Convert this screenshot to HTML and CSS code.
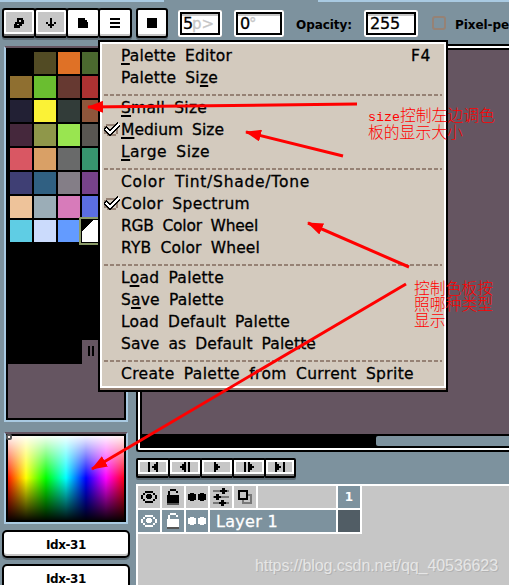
FILE: index.html
```
<!DOCTYPE html>
<html lang="en">
<head>
  <meta charset="UTF-8" />
  <meta name="viewport" content="width=device-width, initial-scale=1.0"/>
  <title>Sprite Editor - Palette Options</title>
  <link rel="stylesheet" href="styles.css">
</head>
<body>

  <div class="tabs"><span class="tab-line left"></span><span class="tab-line right"></span></div>

  <!-- Toolbar -->
  <div class="toolbar">
    <div class="button-group">
      <button class="tool gray"><svg width="12" height="12" viewBox="0 0 12 12"><path d="M4 1h6v2h1v4H9v2H7v2H1V7h1V5h2z"/><path fill="#c6c6c6" d="M6 3h2v2H6zM4 7h2v1H4z"/></svg></button>
      <button class="tool gray"><svg width="12" height="12" viewBox="0 0 12 12"><path d="M5 1h2v6h2V5h2v2H9v2H7v2H5V9H3V7H1V5h2v2h2z"/></svg></button>
      <button class="tool"><svg width="12" height="12" viewBox="0 0 12 12"><path d="M1 1h7v2h2v2h1v6H1z"/></svg></button>
      <button class="tool"><svg width="12" height="12" viewBox="0 0 12 12"><path d="M1 1h10v2H1zM1 5h10v2H1zM1 9h10v2H1z"/></svg></button>
    </div>
    <button class="tool brush"><svg width="10" height="10"><path d="M0 0h10v10H0z"/></svg></button>
    <div class="field size"><span class="fit" data-width="9">5</span><i>p&gt;</i></div>
    <div class="field angle"><span class="fit" data-width="9">0</span><i>°</i></div>
    <span class="caption fit" data-width="56">Opacity:</span>
    <div class="field opacity"><span class="fit" data-width="30">255</span></div>
    <span class="checkbox"></span>
    <span class="caption fit pixel" data-width="54">Pixel-pe</span>
  </div>

  <div class="workspace">
    <!-- Left side: palette and color selector -->
    <div class="sidebar">
      <div class="palette">
        <div class="swatches" id="swatches"></div>
        <div class="palette-end"><span class="grip"></span></div>
      </div>
      <div class="spectrum"><span class="spectrum-mark"></span></div>
      <button class="index"><span class="fit" data-width="40">Idx-31</span></button>
      <button class="index"><span class="fit" data-width="40">Idx-31</span></button>
    </div>

    <!-- Right side: canvas and timeline -->
    <div class="content">
      <div class="editor">
        <div class="canvas"></div>
        <div class="scrollbar"><span class="thumb"></span></div>
      </div>

      <div class="playback">
        <button><svg width="12" height="10"><path d="M1 0h2v10H1zM9 0h2v10H9V8H7V6H5V4h2V2h2z"/></svg></button>
        <button><svg width="12" height="10"><path d="M7 0v10H5V8H3V6H1V4h2V2h2V0zM9 0h2v10H9z"/></svg></button>
        <button><svg width="12" height="10"><path d="M3 0h2v2h2v2h2v2H7v2H5v2H3z"/></svg></button>
        <button><svg width="12" height="10"><path d="M1 0h2v10H1zM5 0h2v2h2v2h2v2H9v2H7v2H5z"/></svg></button>
        <button><svg width="12" height="10"><path d="M1 0h2v2h2v2h2v2H5v2H3v2H1zM9 0h2v10H9z"/></svg></button>
      </div>

      <div class="timeline">
        <div class="row head">
          <span class="cell"><svg width="18" height="16"><use href="#eye"/></svg></span>
          <span class="cell"><svg width="14" height="16"><use href="#lock"/></svg></span>
          <span class="cell"><svg width="20" height="16"><use href="#dots"/></svg></span>
          <span class="cell"><svg width="16" height="18"><path fill="#777" d="M0 2h16v2H0zM0 8h16v2H0zM0 14h16v2H0z"/><path d="M9 0h3v2h2v2h-2v2H9V4H7V2h2zM3 6h3v2h2v2H6v2H3v-2H1V8h2zM8 12h3v2h2v2h-2v2H8v-2H6v-2h2z"/></svg></span>
          <span class="cell"><svg width="14" height="14"><path fill="#777" d="M4 4h10v10H4zM6 6v6h6V6z" fill-rule="evenodd"/><path fill="#c6c6c6" d="M2 2h6v6H2z"/><path d="M0 0h10v10H0zM2 2v6h6V2z" fill-rule="evenodd"/></svg></span>
          <span class="cell wide"></span>
          <span class="cell frame">1</span>
        </div>
        <div class="row layer">
          <span class="cell"><svg width="18" height="16"><use href="#eye"/></svg></span>
          <span class="cell"><svg width="14" height="16"><use href="#lock"/></svg></span>
          <span class="cell"><svg width="20" height="16"><use href="#dots"/></svg></span>
          <span class="cell name"><span class="fit" data-width="62">Layer 1</span></span>
          <span class="cell cel"></span>
        </div>
      </div>
    </div>
  </div>

  <!-- Palette options menu -->
  <div class="menu">
    <div class="item"><span class="fit" data-width="111"><u>P</u>alette Editor</span><span class="shortcut fit" data-width="20">F4</span></div>
    <div class="item"><span class="fit" data-width="97">Palette Si<u>z</u>e</span></div>
    <hr>
    <div class="item"><span class="fit" data-width="86"><u>S</u>mall Size</span></div>
    <div class="item checked"><svg class="check" width="16" height="16"><use href="#check"/></svg><span class="fit" data-width="103"><u>M</u>edium Size</span></div>
    <div class="item"><span class="fit" data-width="89"><u>L</u>arge Size</span></div>
    <hr>
    <div class="item"><span class="fit" data-width="189">Color Tint/Shade/Tone</span></div>
    <div class="item checked"><svg class="check" width="16" height="16"><use href="#check"/></svg><span class="fit" data-width="129">Color Spectrum</span></div>
    <div class="item"><span class="fit" data-width="137">RGB Color Wheel</span></div>
    <div class="item"><span class="fit" data-width="139">RYB Color Wheel</span></div>
    <hr>
    <div class="item"><span class="fit" data-width="103">L<u>o</u>ad Palette</span></div>
    <div class="item"><span class="fit" data-width="103">S<u>a</u>ve Palette</span></div>
    <div class="item"><span class="fit" data-width="169">Load Default Palette</span></div>
    <div class="item"><span class="fit" data-width="195">Save as Default Palette</span></div>
    <hr>
    <div class="item"><span class="fit" data-width="293">Create Palette from Current Sprite</span></div>
  </div>

  <!-- Notes and arrows -->
  <svg class="arrows" width="509" height="585">
    <defs>
      <marker id="head" markerUnits="userSpaceOnUse" markerWidth="16" markerHeight="12" refX="15" refY="6" orient="auto">
        <path d="M0 0L16 6L0 12z" fill="#f00"/>
      </marker>
    </defs>
    <path d="M357 104L88 107"/>
    <path d="M343 156L246 132"/>
    <path d="M409 267L308 223"/>
    <path d="M406 284L92 469"/>
  </svg>
  <div class="note first"><span>size</span>控制左边调色<br>板的显示大小</div>
  <div class="note second">控制色板按<br>照哪种类型<br>显示</div>
  <div class="watermark"><span class="fit" data-width="243">https://blog.csdn.net/qq_40536623</span></div>

  <!-- Shared icons -->
  <svg class="icons">
    <symbol id="eye" viewBox="0 0 18 16">
      <path d="M5 2h8v2H5zM3 4h2v2H3zM13 4h2v2h-2zM1 6h2v4H1zM15 6h2v4h-2zM3 10h2v2H3zM13 10h2v2h-2zM5 12h8v2H5zM7 5h4v1h1v3h-1v1H7V9H6V6h1z"/>
      <path class="hole" d="M7 6h2v1H7z"/>
    </symbol>
    <symbol id="lock" viewBox="0 0 14 16">
      <path d="M4 0h6v2h2v2h-2V2H4v4h9v8H1V6h1V2h2z"/>
      <path class="hole" d="M7 8h2v4H7z"/>
      <path fill="#555" d="M1 14h12v2H1z"/>
    </symbol>
    <symbol id="dots" viewBox="0 0 20 16">
      <path d="M3 4h4v1h2v6H7v1H3v-1H1V5h2zM13 4h4v1h2v6h-2v1h-4v-1h-2V5h2z"/>
    </symbol>
    <symbol id="check" viewBox="0 0 16 16">
      <path fill="#968275" d="M2 2h11v2h1v8h-2v2H3v-2H0V4h2z"/>
      <path fill="#d3cabe" d="M3 4h9v8H3z"/>
      <path fill="none" stroke="#000" stroke-width="5" d="M1 6l5 5l9-9"/>
      <path fill="none" stroke="#fff" stroke-width="2" d="M2 7l4 4l9-9"/>
    </symbol>
  </svg>

  <script>
    const colors = [
      '#000000', '#524b24', '#df7126', '#4b692f', '#8f6f30', '#6abe30', '#663931', '#ac3232',
      '#222034', '#fbf236', '#323c39', '#8f563b', '#45283c', '#8f974a', '#99e550', '#595652',
      '#d95763', '#d9a066', '#696a6a', '#37946e', '#3f3f74', '#306082', '#847e87', '#76428a',
      '#eec39a', '#9badb7', '#d77bba', '#5b6ee1', '#5fcde4', '#cbdbfc', '#639bff', '#ffffff'
    ];

    // Fill the palette
    const swatches = document.getElementById('swatches');
    colors.forEach((color, i) => {
      const swatch = document.createElement('span');
      swatch.className = i === colors.length - 1 ? 'swatch selected' : 'swatch';
      swatch.style.backgroundColor = color;
      swatches.appendChild(swatch);
    });

    // Spread the letters of each label over its width
    document.querySelectorAll('.fit').forEach(label => {
      const width = Number(label.dataset.width);
      label.style.width = 'auto';
      const natural = label.getBoundingClientRect().width;
      label.style.letterSpacing = (width - natural) / label.textContent.length + 'px';
    });
  </script>

</body>
</html>
```
FILE: styles.css
```
* {
  box-sizing: border-box;
}

body {
  position: relative;
  margin: 0;
  width: 509px;
  height: 585px;
  overflow: hidden;
  background-color: #7d929e;
  color: #000;
  font-family: "DejaVu Sans", sans-serif;
  font-size: 15px;
}

button {
  padding: 0;
  border: 2px solid #000;
  background-color: #fff;
  color: #000;
  font-family: inherit;
  display: flex;
  align-items: center;
  justify-content: center;
}

svg {
  display: block;
  shape-rendering: crispEdges;
}

.fit {
  display: inline-block;
  white-space: nowrap;
}

.icons {
  display: none;
}

.tabs {
  display: flex;
  justify-content: space-between;
  height: 8px;
}

.tab-line {
  height: 2px;
  background-color: #a9cae2;
}

.tab-line.left {
  width: 164px;
}

.tab-line.right {
  width: 191px;
}

/* Toolbar */
.toolbar {
  display: flex;
  align-items: flex-start;
  height: 36px;
  padding-left: 2px;
  white-space: nowrap;
}

.button-group {
  display: flex;
}

.tool {
  flex: none;
  width: 34px;
  height: 30px;
  margin-right: -2px;
  border-radius: 3px;
  box-shadow: inset 0 -2px #c6c6c6, 0 2px #5c6a73;
}

.tool.gray {
  background-color: #c6c6c6;
  box-shadow: inset 0 -2px #777, inset 0 -4px #fff, inset 0 0 0 2px #fff, 0 2px #5c6a73;
}

.tool.brush {
  width: 32px;
  margin-left: 6px;
  margin-right: 10px;
}

.field {
  flex: none;
  height: 27px;
  margin-top: 2px;
  background-color: #fff;
  box-shadow: inset 0 0 0 2px #fff, inset 0 0 0 4px #000, inset 0 6px #c6c6c6;
  border-radius: 2px;
  line-height: 27px;
  font-size: 16px;
  -webkit-text-stroke: 0.3px;
}

.field i {
  color: #c6c6c6;
  font-style: normal;
  font-size: 15px;
}

.field.size {
  width: 44px;
  padding-left: 5px;
}

.field.angle {
  width: 50px;
  margin-left: 12px;
  padding-left: 6px;
}

.field.opacity {
  width: 54px;
  margin-left: 12px;
  padding-left: 6px;
}

.caption {
  flex: none;
  margin-left: 12px;
  margin-top: 8px;
  font-size: 12px;
  font-weight: bold;
  line-height: 18px;
}

.caption.pixel {
  margin-left: 9px;
}

.checkbox {
  flex: none;
  width: 14px;
  height: 14px;
  margin: 8px 0 0 14px;
  border: 2px solid #968275;
  border-radius: 3px;
}

.workspace {
  display: flex;
}

/* Sidebar */
.sidebar {
  flex: none;
  width: 136px;
  padding: 2px 0 0 2px;
}

.palette {
  width: 124px;
  height: 376px;
  margin-left: 2px;
  border: 2px solid #a9cae2;
  border-top: 2px solid #655561;
  background-color: #655561;
  box-shadow: inset 0 0 0 2px #000;
}

.swatches {
  display: grid;
  grid-template-columns: repeat(4, 22px);
  grid-auto-rows: 22px;
  gap: 2px;
  height: 292px;
  padding: 4px;
  background-color: #000;
}

.swatch.selected {
  background-image: linear-gradient(135deg, #000 0 8px, transparent 8px);
  outline: 2px solid #8b9b68;
  outline-offset: 1px;
}

.palette-end {
  display: flex;
  height: 24px;
  border-left: 76px solid #000;
  padding: 6px;
}

.grip {
  width: 6px;
  height: 10px;
  border: solid #000;
  border-width: 0 2px;
}

.spectrum {
  width: 124px;
  height: 92px;
  margin: 10px 0 6px 2px;
  border: 2px solid #a9cae2;
  border-top-color: #655561;
  background:
    linear-gradient(#fff, rgba(255, 255, 255, 0) 50%, rgba(0, 0, 0, 0) 50%, #000),
    linear-gradient(90deg, #f00, #ff0, #0f0, #0ff, #00f, #f0f, #f00);
  box-shadow: inset 0 0 0 2px #000;
}

.spectrum-mark {
  display: block;
  width: 6px;
  height: 6px;
  border: 2px solid #555;
  border-radius: 2px;
}

.index {
  width: 128px;
  height: 28px;
  margin-bottom: 6px;
  border-radius: 5px;
  box-shadow: inset 0 -2px #c6c6c6, 0 2px #5c6a73;
  font-size: 12px;
  font-weight: bold;
}

.index .fit {
  margin-top: 2px;
}

/* Canvas */
.content {
  flex: none;
  width: 373px;
}

.editor {
  height: 408px;
  padding: 2px 0 2px 2px;
  background-color: #fff;
  border: 2px solid #000;
  border-right: 0;
  border-radius: 3px 0 0 3px;
}

.canvas {
  height: 386px;
  border: solid #000;
  border-width: 2px 0 0 2px;
  background-color: #655561;
}

.scrollbar {
  height: 14px;
  padding: 2px 0 2px 236px;
  background-color: #000;
}

.thumb {
  display: block;
  height: 10px;
  background-color: #7d929e;
  border-radius: 2px 0 0 2px;
}

.playback {
  display: flex;
  height: 26px;
  margin-top: 6px;
}

.playback button {
  width: 34px;
  height: 20px;
  margin-right: -2px;
  padding-bottom: 2px;
  border-radius: 2px;
  background-color: #c6c6c6;
  box-shadow: inset 0 -2px #777, inset 0 -4px #fff, inset 0 0 0 2px #fff, 0 2px #5c6a73;
}

.playback button:last-child {
  width: 32px;
}

/* Timeline */
.timeline {
  height: 101px;
  padding-left: 2px;
  border-top: 2px solid #fff;
  background-color: #c6c6c6;
  box-shadow: inset 2px 0 #fff;
}

.row {
  display: flex;
  width: 224px;
  height: 24px;
}

.cell {
  display: flex;
  align-items: center;
  justify-content: center;
  flex: none;
  width: 24px;
  border: solid #fff;
  border-width: 0 2px 2px 0;
}

.cell.wide {
  width: 80px;
}

.cell.frame {
  background-color: #7d929e;
  color: #fff;
  font-size: 12px;
  font-weight: bold;
}

.row .hole {
  fill: #c6c6c6;
}

.row.layer {
  background-color: #7d929e;
  color: #fff;
  fill: #fff;
}

.row.layer .hole {
  fill: #7d929e;
}

.cell.name {
  width: 128px;
  padding-left: 6px;
  justify-content: flex-start;
  font-size: 16px;
  -webkit-text-stroke: 0.3px;
}

.cell.cel {
  background-color: #515d65;
}

/* Menu */
.menu {
  position: absolute;
  left: 98px;
  top: 40px;
  width: 350px;
  height: 352px;
  padding: 3px 4px;
  border: 2px solid #000;
  background-color: #d3cabe;
  box-shadow: inset 0 -2px #968275, inset 0 -4px #fff, inset 0 0 0 2px #fff;
}

.item {
  display: flex;
  align-items: center;
  height: 22px;
  padding-left: 17px;
  font-size: 15.5px;
  word-spacing: 4px;
  -webkit-text-stroke: 0.3px;
}

.item.checked {
  padding-left: 0;
}

.item u {
  text-decoration-thickness: 2px;
  text-underline-offset: 2px;
  text-decoration-skip-ink: none;
}

.check {
  margin-right: 1px;
}

.shortcut {
  margin-left: auto;
  margin-right: 11px;
}

.menu hr {
  height: 8px;
  margin: 0;
  border: 0;
  background: repeating-linear-gradient(90deg, #968275 0 4px, transparent 4px 6px) 0 5px / 100% 2px no-repeat;
}

/* Notes */
.arrows {
  position: absolute;
  left: 0;
  top: 0;
  shape-rendering: auto;
}

.arrows > path {
  fill: none;
  stroke: #f00;
  stroke-width: 3;
  marker-end: url(#head);
}

.note {
  position: absolute;
  color: #f00;
  font-family: "Noto Sans CJK SC", sans-serif;
  font-size: 15.8px;
  font-weight: 300;
  line-height: 16px;
  white-space: nowrap;
}

.note span {
  font-family: "Liberation Mono", monospace;
  font-size: 13.33px;
  line-height: 1;
}

.note.first {
  left: 368px;
  top: 107px;
}

.note.second {
  left: 414px;
  top: 280px;
}

.watermark {
  position: absolute;
  left: 255px;
  top: 556px;
  color: #e6e6e6;
  font-family: "Liberation Sans", sans-serif;
  font-size: 16px;
  line-height: 20px;
  text-shadow: 1px 1px #b2b2b2;
}
```
